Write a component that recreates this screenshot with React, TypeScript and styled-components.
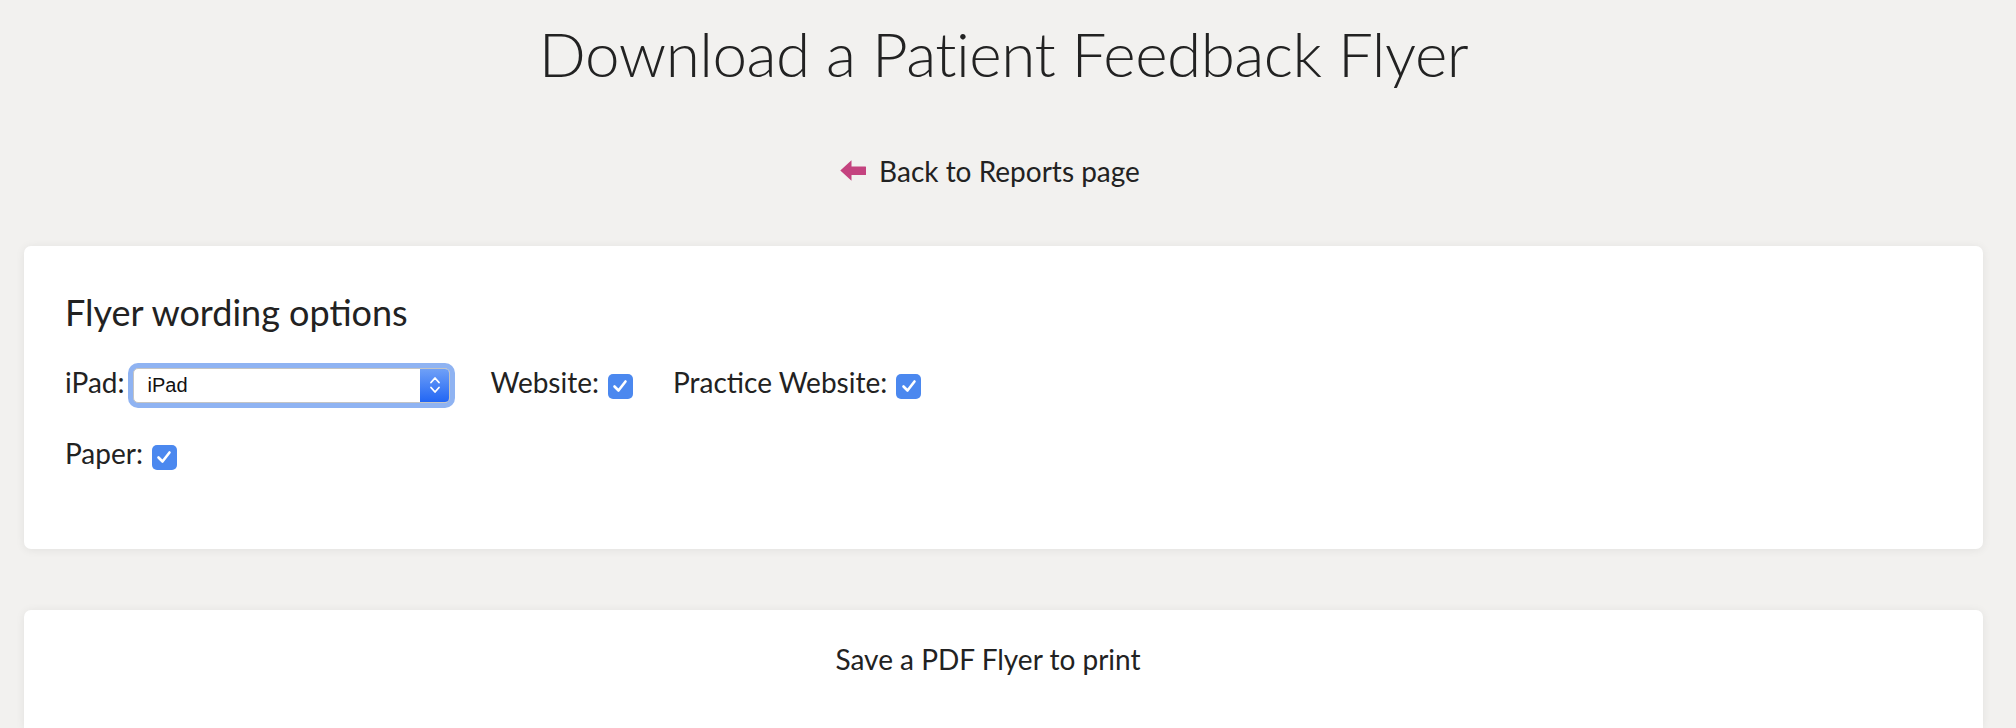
import * as React from "react";
import styled, { createGlobalStyle } from "styled-components";

type TOption = {
  label: string;
  kind: "select" | "check";
  value?: string;
};

const optionRows: TOption[][] = [
  [
    { label: "iPad:", kind: "select", value: "iPad" },
    { label: "Website:", kind: "check" },
    { label: "Practice Website:", kind: "check" }
  ],
  [{ label: "Paper:", kind: "check" }]
];

const GlobalStyle = createGlobalStyle`
  html, body {
    margin: 0;
    padding: 0;
    background: #f2f1ef;
  }
  body {
    font-family: Lato, "Open Sans", "Liberation Sans", sans-serif;
    color: #222;
    overflow: hidden;
  }
  * {
    box-sizing: border-box;
  }
`;

const BackArrow = () => (
  <svg width="26" height="21" viewBox="0 0 26 21">
    <path d="M0.3 10.5 L11.5 0.3 L11.5 6.5 L25.5 6.5 Q26 6.5 26 7 L26 14.5 Q26 15 25.5 15 L11.5 15 L11.5 20.7 Z" fill="#c4437f" />
  </svg>
);

const Chevrons = () => (
  <svg width="12" height="20" viewBox="0 0 12 20">
    <path d="M2 7.5 L6 3 L10 7.5" fill="none" stroke="#fff" strokeWidth="1.8" strokeLinecap="round" strokeLinejoin="round" />
    <path d="M2 12.5 L6 17 L10 12.5" fill="none" stroke="#fff" strokeWidth="1.8" strokeLinecap="round" strokeLinejoin="round" />
  </svg>
);

const Tick = () => (
  <svg width="16" height="14" viewBox="0 0 16 14">
    <path d="M2.5 7.5 L6.5 11.5 L13.5 2.5" fill="none" stroke="#fff" strokeWidth="2.6" strokeLinecap="round" strokeLinejoin="round" />
  </svg>
);

export default function App() {
  const renderControl = (option: TOption) => {
    if (option.kind === "select") {
      return (
        <SelectBox>
          <SelectValue>{option.value}</SelectValue>
          <Stepper>
            <Chevrons />
          </Stepper>
        </SelectBox>
      );
    }
    return (
      <CheckBox>
        <Tick />
      </CheckBox>
    );
  };

  return (
    <Page>
      <GlobalStyle />
      <Title>Download a Patient Feedback Flyer</Title>
      <BackRow>
        <BackLink href="#">
          <BackArrow />
          Back to Reports page
        </BackLink>
      </BackRow>
      <OptionsCard>
        <CardHeading>Flyer wording options</CardHeading>
        {optionRows.map((row, i) => (
          <FormRow key={i}>
            {row.map(option => (
              <Field key={option.label}>
                <FieldLabel>{option.label}</FieldLabel>
                {renderControl(option)}
              </Field>
            ))}
          </FormRow>
        ))}
      </OptionsCard>
      <PrintCard>
        <PrintTitle>Save a PDF Flyer to print</PrintTitle>
      </PrintCard>
    </Page>
  );
}

const Page = styled.div`
  width: 100%;
  height: 728px;
  padding: 0 33px 0 24px;
  display: flex;
  flex-direction: column;
`;

const Title = styled.h1`
  margin: 0;
  padding-top: 17px;
  font-size: 62px;
  line-height: 72px;
  font-weight: 300;
  letter-spacing: -0.5px;
  text-align: center;
  color: #222;
`;

const BackRow = styled.div`
  margin-top: 65px;
  display: flex;
  justify-content: center;
`;

const BackLink = styled.a`
  display: inline-flex;
  align-items: center;
  gap: 13px;
  padding-right: 27px;
  font-size: 28px;
  line-height: 34px;
  color: #222;
  text-decoration: none;
  svg {
    margin-top: -2px;
  }
`;

const Card = styled.div`
  background: #fff;
  border-radius: 7px;
  box-shadow: 0 1px 10px rgba(0, 0, 0, 0.07);
`;

const OptionsCard = styled(Card)`
  margin-top: 58px;
  padding: 44px 40px 69px 41px;
`;

const CardHeading = styled.h2`
  margin: 0 0 27px;
  font-size: 36px;
  line-height: 44px;
  font-weight: 400;
  color: #222;
`;

const FormRow = styled.div`
  display: flex;
  align-items: center;
  height: 48px;
  & + & {
    margin-top: 23px;
  }
`;

const Field = styled.div`
  display: flex;
  align-items: center;
  gap: 9px;
  margin-right: 40px;
`;

const FieldLabel = styled.span`
  font-size: 28px;
  line-height: 34px;
  margin-bottom: 6px;
`;

const SelectBox = styled.div`
  width: 317px;
  height: 35px;
  display: flex;
  align-items: center;
  background: #fff;
  border: 1px solid #c4c4c4;
  border-radius: 5px;
  box-shadow: 0 0 0 5px #8fb3f2;
  overflow: hidden;
`;

const SelectValue = styled.span`
  flex: 1;
  padding-left: 13px;
  font-family: "Liberation Sans", Arial, sans-serif;
  font-size: 20px;
  color: #111;
`;

const Stepper = styled.span`
  width: 29px;
  height: 100%;
  display: flex;
  align-items: center;
  justify-content: center;
  background: linear-gradient(#6fa0f7, #2266f4);
`;

const CheckBox = styled.span`
  width: 25px;
  height: 25px;
  margin-top: 2px;
  display: inline-flex;
  align-items: center;
  justify-content: center;
  background: #4b88ef;
  border-radius: 5px;
`;

const PrintCard = styled(Card)`
  margin-top: 61px;
  flex: 1;
  padding-top: 32px;
  border-bottom-left-radius: 0;
  border-bottom-right-radius: 0;
`;

const PrintTitle = styled.div`
  text-align: center;
  padding-right: 31px;
  font-size: 28px;
  line-height: 34px;
`;
